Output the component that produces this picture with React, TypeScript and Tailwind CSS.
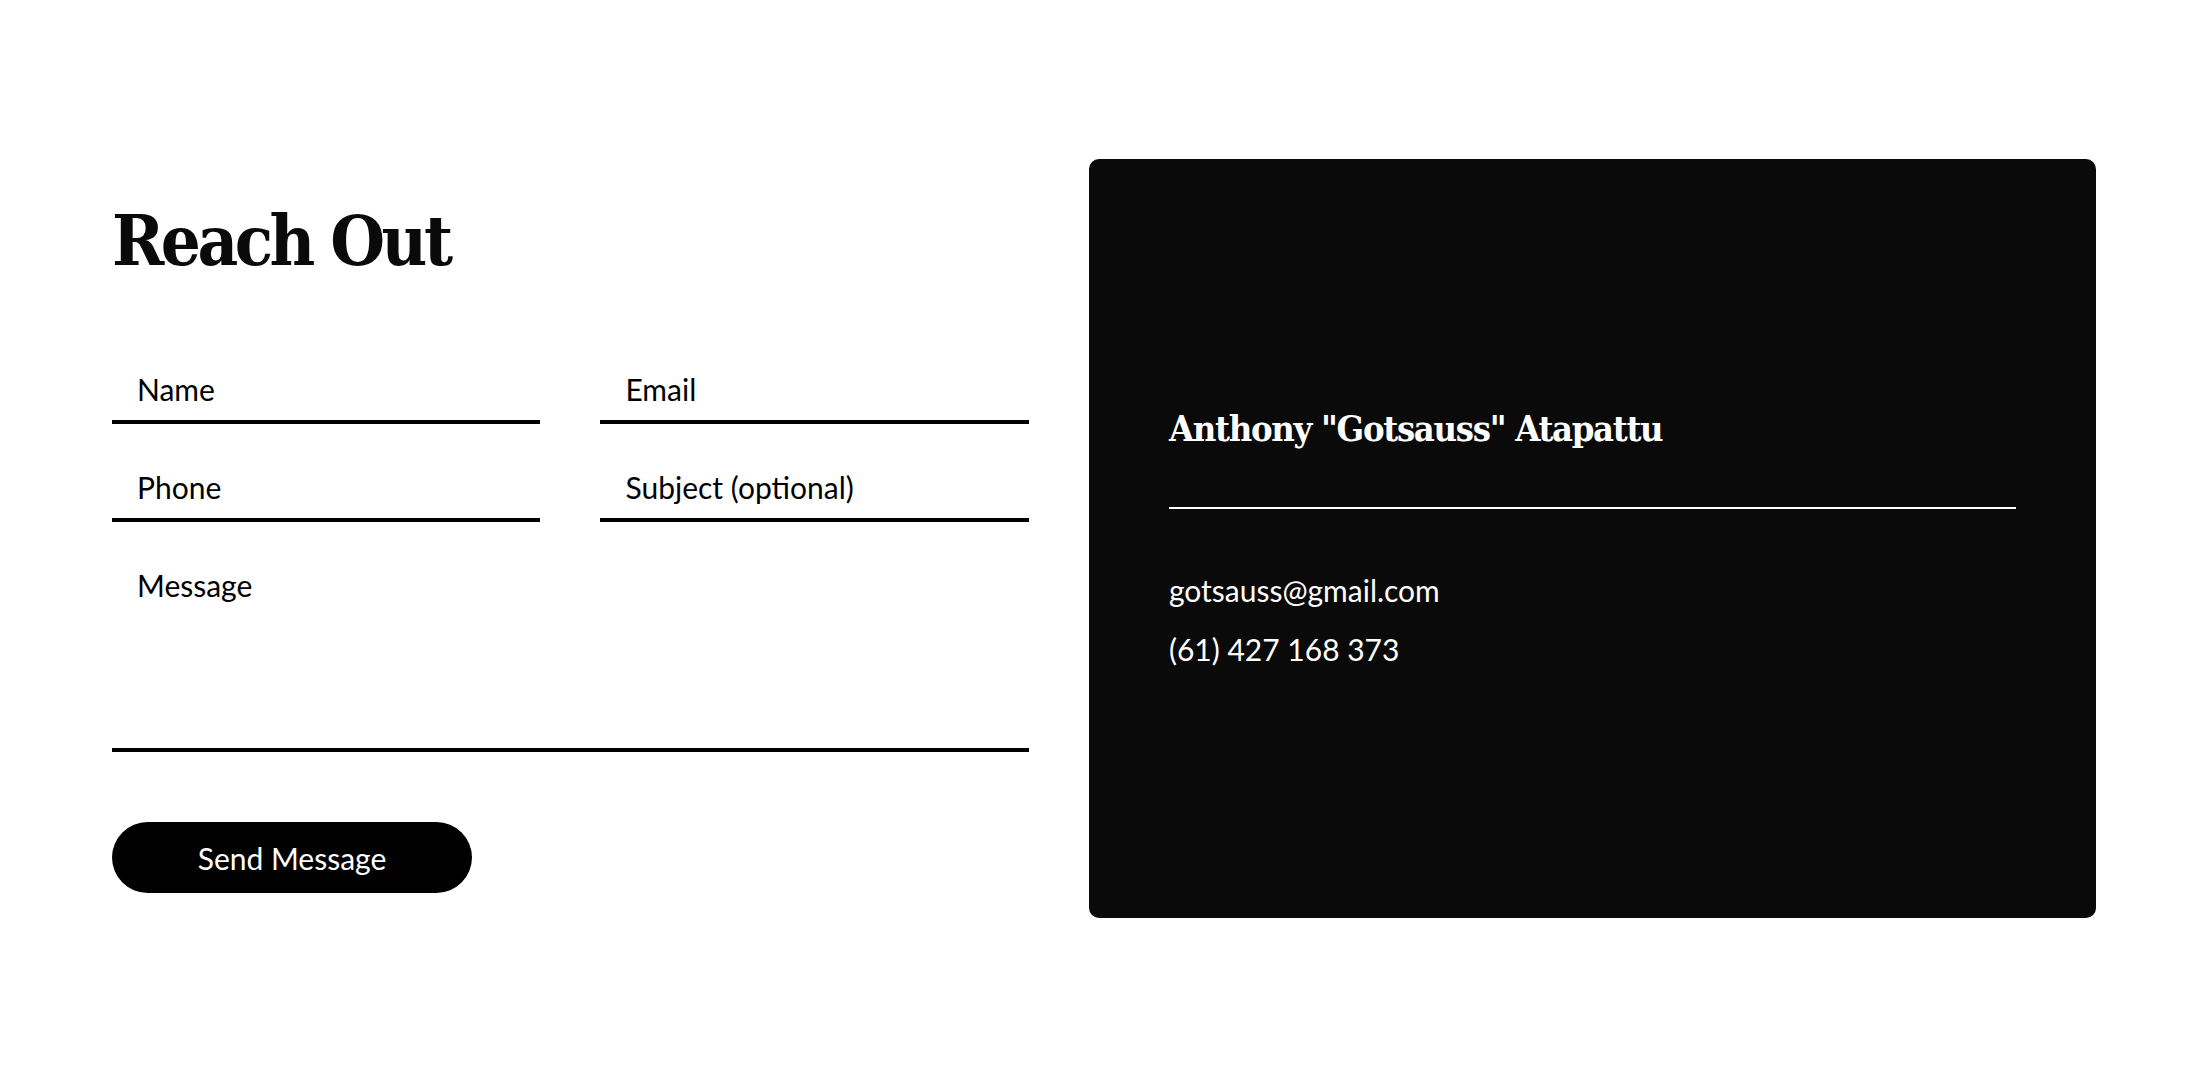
const fieldClass =
  "h-[98px] w-full border-b-4 border-black bg-transparent pt-[45px] pb-[13px] pl-[25px] pr-4 text-[30px] leading-[36px] text-black outline-none placeholder:text-black";

const serif = "font-['DejaVu_Serif_Condensed','DejaVu_Serif',serif] font-stretch-condensed";

function ContactForm() {
  return (
    <div className="flex w-[918px] flex-col pt-[47px]">
      <h1
        className={`${serif} mb-[50px] text-[70px] font-bold leading-none tracking-[-3.5px] text-[#0a0a0a]`}
      >
        Reach Out
      </h1>
      <form className="flex flex-col" onSubmit={(e) => e.preventDefault()}>
        <div className="grid grid-cols-2 gap-x-[60px]">
          <input className={fieldClass} placeholder="Name" />
          <input className={fieldClass} placeholder="Email" />
          <input className={fieldClass} placeholder="Phone" />
          <input className={fieldClass} placeholder="Subject (optional)" />
        </div>
        <textarea
          className="h-[230px] w-full resize-none border-b-4 border-black bg-transparent pt-[45px] pl-[25px] pr-4 text-[30px] leading-[36px] text-black outline-none placeholder:text-black"
          placeholder="Message"
        />
        <button
          type="submit"
          className="mt-[70px] h-[71px] w-[360px] rounded-full bg-black text-[30px] leading-[36px] text-white"
        >
          Send Message
        </button>
      </form>
    </div>
  );
}

function ContactCard() {
  return (
    <div className="flex h-[759px] w-[1008px] flex-col justify-center rounded-[10px] bg-[#0a0a0a] px-[80px] text-white">
      <h2 className={`${serif} text-[36px] font-bold leading-none tracking-[-1.3px]`}>
        Anthony "Gotsauss" Atapattu
      </h2>
      <div className="mt-[61px] h-[2px] w-full bg-white" />
      <div className="mt-[63px] flex flex-col gap-[23px] text-[30px] leading-[36px]">
        <span>gotsauss@gmail.com</span>
        <span>(61) 427 168 373</span>
      </div>
    </div>
  );
}

export default function App() {
  return (
    <div className="min-h-screen bg-white font-['Lato',sans-serif]">
      <div className="flex items-start gap-[60px] px-[112px] pt-[159px]">
        <ContactForm />
        <ContactCard />
      </div>
    </div>
  );
}
